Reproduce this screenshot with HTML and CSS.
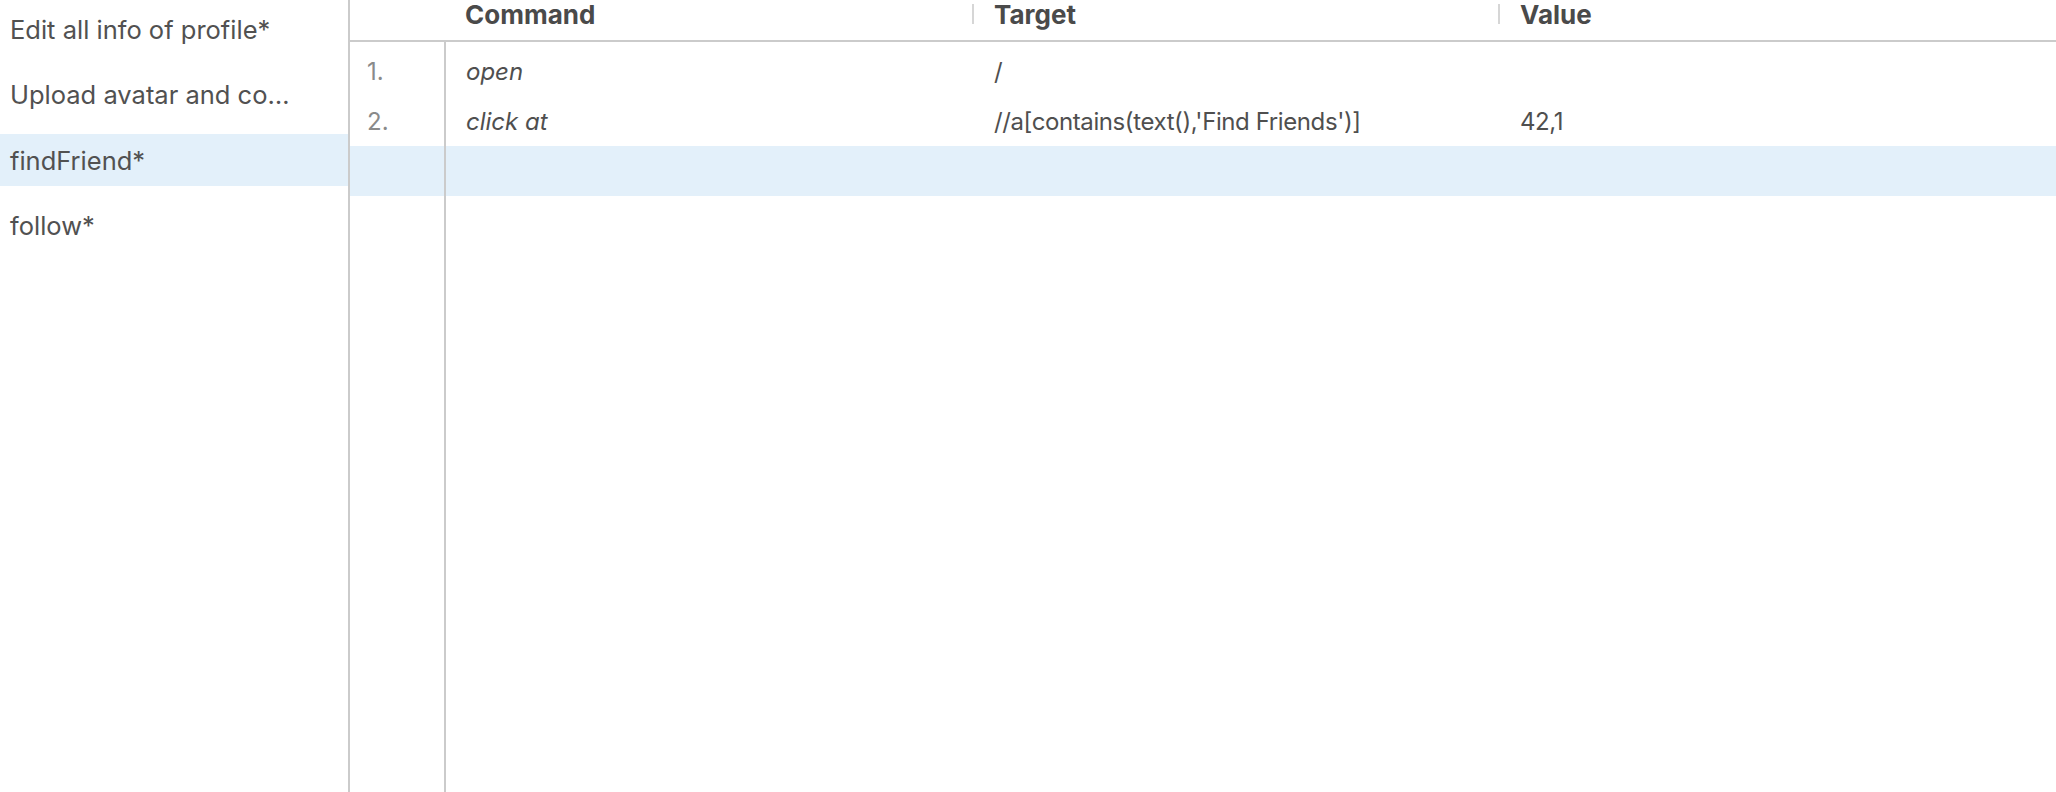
FILE: index.html
```html
<!DOCTYPE html>
<html lang="en">
<head>
<meta charset="utf-8">
<title>Tests</title>
<link rel="stylesheet" href="styles.css">
</head>
<body>
<div class="app">
  <aside class="sidebar">
    <ul class="tests">
      <li class="test">Edit all info of profile*</li>
      <li class="test">Upload avatar and co…</li>
      <li class="test selected">findFriend*</li>
      <li class="test">follow*</li>
    </ul>
  </aside>
  <main class="editor">
    <div class="head">
      <div class="hcell"></div>
      <div class="hcell">Command</div>
      <div class="hcell sep">Target</div>
      <div class="hcell sep">Value</div>
    </div>
    <div class="body">
      <div class="row">
        <div class="idx">1.</div>
        <div class="cell cmd">open</div>
        <div class="cell">/</div>
        <div class="cell"></div>
      </div>
      <div class="row">
        <div class="idx">2.</div>
        <div class="cell cmd">click at</div>
        <div class="cell">//a[contains(text(),'Find Friends')]</div>
        <div class="cell">42,1</div>
      </div>
      <div class="row selected">
        <div class="idx"></div>
        <div class="cell cmd"></div>
        <div class="cell"></div>
        <div class="cell"></div>
      </div>
    </div>
  </main>
</div>
</body>
</html>
```

FILE: styles.css
```css
* { box-sizing: border-box; }
html, body { margin: 0; padding: 0; height: 100%; background: #fff; }
body {
  font-family: Inter, "Noto Sans", "Liberation Sans", sans-serif;
  color: #4f4f4f;
}
.app {
  display: flex;
  height: 792px;
}
.sidebar {
  width: 350px;
  flex: none;
  border-right: 2px solid #cbcbcb;
}
.tests {
  list-style: none;
  margin: 0;
  padding: 3px 0 0 0;
  display: flex;
  flex-direction: column;
  gap: 13.5px;
}
.test {
  height: 52px;
  display: flex;
  align-items: center;
  padding-left: 10px;
  font-size: 25.5px;
  color: #515151;
  white-space: nowrap;
}
.test.selected { background: #e3f0fa; }

.editor {
  flex: 1;
  display: flex;
  flex-direction: column;
}
.head, .row {
  display: grid;
  grid-template-columns: 96px 526px 526px 1fr;
}
.head {
  height: 42px;
  border-bottom: 2px solid #cbcbcb;
}
.hcell {
  font-weight: 700;
  font-size: 26px;
  color: #4a4a4a;
  padding-left: 19px;
  line-height: 30px;
  position: relative;
}
.hcell.sep { padding-left: 22px; }
.hcell.sep::before {
  content: "";
  position: absolute;
  left: 0;
  top: 4px;
  width: 2px;
  height: 20px;
  background: #d6d6d6;
}
.body {
  flex: 1;
  padding-top: 4px;
  background: linear-gradient(#cbcbcb, #cbcbcb) no-repeat 94px 0 / 2px 100%;
}
.row { height: 50px; }
.row.selected { background: #e3f0fa; }
.idx {
  border-right: 2px solid #cbcbcb;
  padding-left: 17px;
  display: flex;
  align-items: center;
  font-size: 24px;
  color: #8a8a8a;
}
.cell {
  display: flex;
  align-items: center;
  padding-left: 20px;
  font-size: 24px;
  color: #4f4f4f;
  white-space: nowrap;
  letter-spacing: -0.4px;
}
.cell + .cell { padding-left: 22px; }
.cell.cmd { font-style: italic; letter-spacing: 0; }
```
